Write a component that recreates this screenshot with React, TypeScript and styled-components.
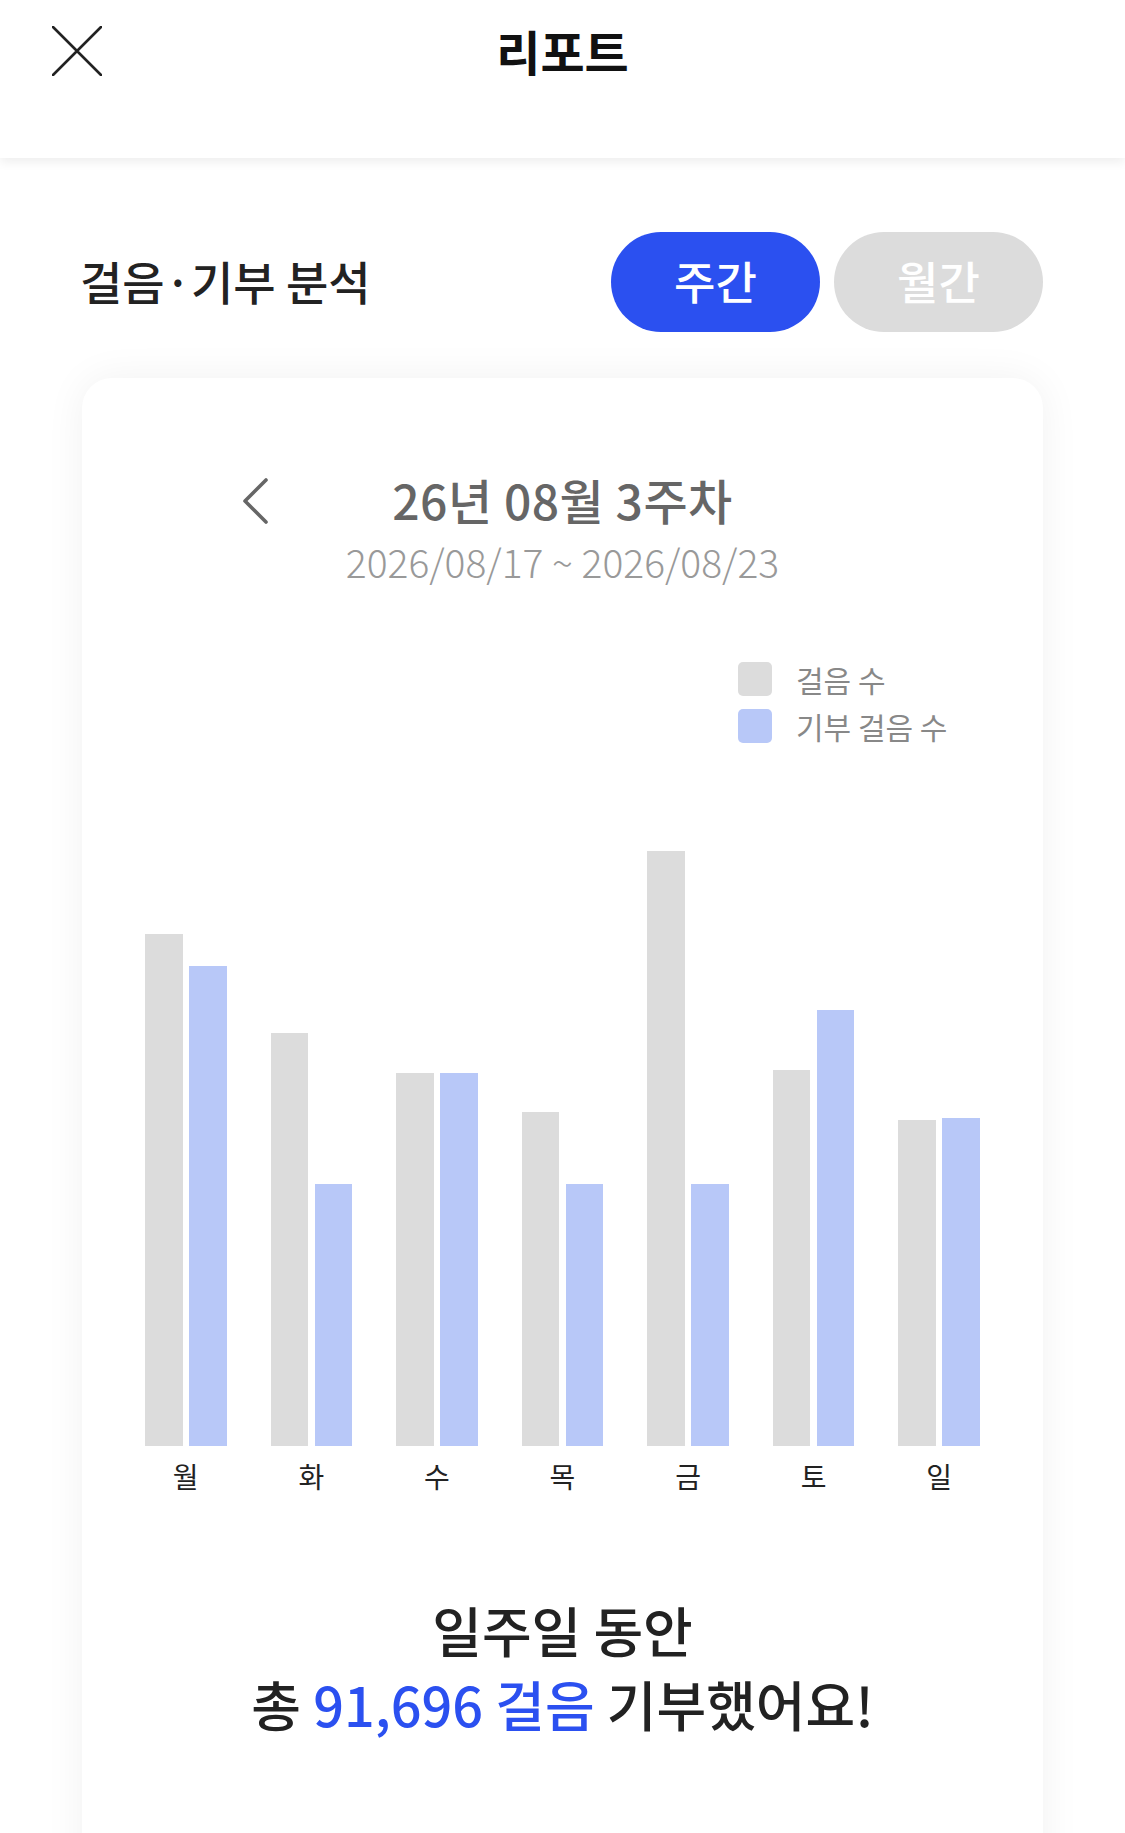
import React from "react";
import styled, { createGlobalStyle } from "styled-components";

const GlobalStyle = createGlobalStyle`
  html, body {
    margin: 0;
    padding: 0;
    background: #ffffff;
  }
  body {
    font-family: "Noto Sans CJK KR", "Noto Sans", sans-serif;
    -webkit-font-smoothing: antialiased;
  }
  * { box-sizing: border-box; }
`;

const Page = styled.div`
  width: 1125px;
  height: 1833px;
  overflow: hidden;
  background: #ffffff;
`;

const Header = styled.header`
  height: 158px;
  background: #ffffff;
  box-shadow: 0 4px 10px rgba(0, 0, 0, 0.07);
  position: relative;
  z-index: 1;
`;

const HeaderRow = styled.div`
  height: 100px;
  display: grid;
  grid-template-columns: 1fr auto 1fr;
  align-items: center;
  padding: 0 52px;
`;

const CloseButton = styled.button`
  width: 50px;
  height: 50px;
  padding: 0;
  border: none;
  background: none;
  display: flex;
  align-items: center;
  justify-content: center;
  justify-self: start;
  margin-top: 2px;
`;

const HeaderTitle = styled.h1`
  margin: 0;
  font-size: 48px;
  font-weight: 700;
  color: #111111;
  line-height: 1;
`;

const SectionRow = styled.div`
  margin-top: 74px;
  height: 100px;
  padding: 0 82px 0 80px;
  display: flex;
  align-items: center;
  justify-content: space-between;
`;

const SectionTitle = styled.h2`
  margin: 0 0 4px;
  font-size: 46px;
  font-weight: 500;
  color: #222222;
`;

const Toggle = styled.div`
  display: flex;
  gap: 14px;
`;

const ToggleButton = styled.button<{ $active?: boolean }>`
  width: 209px;
  height: 100px;
  border: none;
  border-radius: 50px;
  background: ${(p) => (p.$active ? "#2b50f0" : "#dcdcdc")};
  color: #ffffff;
  font-family: inherit;
  font-size: 45px;
  font-weight: 500;
  line-height: 1;
  padding: 0 0 4px;
`;

const Card = styled.section`
  margin: 46px 82px 0;
  min-height: 1600px;
  background: #ffffff;
  border-radius: 30px;
  box-shadow: 0 0 40px rgba(0, 0, 0, 0.06);
  padding-top: 91px;
  display: flex;
  flex-direction: column;
`;

const WeekNav = styled.div`
  display: grid;
  grid-template-columns: 1fr auto 1fr;
  align-items: center;
  height: 60px;
`;

const PrevButton = styled.button`
  justify-self: start;
  margin-left: 156px;
  margin-top: 4px;
  width: 36px;
  height: 50px;
  padding: 0;
  border: none;
  background: none;
  display: flex;
  align-items: center;
  justify-content: center;
`;

const WeekTitle = styled.div`
  font-size: 48px;
  font-weight: 500;
  color: #666666;
  line-height: 60px;
  letter-spacing: 0.5px;
`;

const DateRange = styled.div`
  margin-top: 10px;
  text-align: center;
  font-size: 39px;
  font-weight: 300;
  color: #999999;
  line-height: 44px;
`;

const Legend = styled.div`
  margin-top: 79px;
  align-self: flex-end;
  margin-right: 96px;
  display: flex;
  flex-direction: column;
  gap: 13px;
  width: 209px;
`;

const LegendItem = styled.div`
  display: flex;
  align-items: center;
  gap: 24px;
  height: 34px;
`;

const Swatch = styled.span<{ $color: string }>`
  width: 34px;
  height: 34px;
  border-radius: 5px;
  background: ${(p) => p.$color};
  flex-shrink: 0;
`;

const LegendLabel = styled.span`
  font-size: 30px;
  color: #888888;
  line-height: 1;
  white-space: nowrap;
`;

const Chart = styled.div`
  margin-top: 103px;
  padding: 0 63px;
  display: flex;
  justify-content: space-between;
`;

const DayColumn = styled.div`
  display: flex;
  flex-direction: column;
  align-items: center;
`;

const Bars = styled.div`
  height: 600px;
  display: flex;
  align-items: flex-end;
  gap: 6.5px;
`;

const Bar = styled.div<{ $color: string }>`
  width: 37.5px;
  background: ${(p) => p.$color};
`;

const DayLabel = styled.div`
  margin-top: 10px;
  font-size: 28px;
  line-height: 40px;
  color: #222222;
`;

const Summary = styled.div`
  margin-top: 97px;
  text-align: center;
  font-size: 54px;
  font-weight: 500;
  line-height: 74px;
  color: #222222;
`;

const Highlight = styled.span`
  color: #2b50f0;
`;

const GRAY = "#dcdcdc";
const BLUE = "#b8c8f8";
const MAX_HEIGHT = 595;

const data = [
  { day: "월", steps: 17200, donated: 16150 },
  { day: "화", steps: 13880, donated: 8800 },
  { day: "수", steps: 12530, donated: 12530 },
  { day: "목", steps: 11240, donated: 8800 },
  { day: "금", steps: 20000, donated: 8800 },
  { day: "토", steps: 12650, donated: 14670 },
  { day: "일", steps: 10960, donated: 11030 },
];

const maxSteps = Math.max(...data.flatMap((d) => [d.steps, d.donated]));
const toHeight = (v: number) => `${(v / maxSteps) * MAX_HEIGHT}px`;

export default function App() {
  return (
    <Page>
      <GlobalStyle />
      <Header>
        <HeaderRow>
          <CloseButton aria-label="닫기">
            <svg width="50" height="50" viewBox="0 0 50 50" fill="none">
              <path d="M1 1L49 49M49 1L1 49" stroke="#222" strokeWidth="2.6" strokeLinecap="round" />
            </svg>
          </CloseButton>
          <HeaderTitle>리포트</HeaderTitle>
          <span />
        </HeaderRow>
      </Header>

      <SectionRow>
        <SectionTitle>걸음·기부 분석</SectionTitle>
        <Toggle>
          <ToggleButton $active>주간</ToggleButton>
          <ToggleButton>월간</ToggleButton>
        </Toggle>
      </SectionRow>

      <Card>
        <WeekNav>
          <PrevButton aria-label="이전 주">
            <svg width="26" height="46" viewBox="0 0 26 46" fill="none">
              <path d="M23 2L2 23L23 44" stroke="#666" strokeWidth="3.6" strokeLinecap="round" strokeLinejoin="round" />
            </svg>
          </PrevButton>
          <WeekTitle>26년 08월 3주차</WeekTitle>
          <span />
        </WeekNav>
        <DateRange>2026/08/17 ~ 2026/08/23</DateRange>

        <Legend>
          <LegendItem>
            <Swatch $color={GRAY} />
            <LegendLabel>걸음 수</LegendLabel>
          </LegendItem>
          <LegendItem>
            <Swatch $color={BLUE} />
            <LegendLabel>기부 걸음 수</LegendLabel>
          </LegendItem>
        </Legend>

        <Chart>
          {data.map((d) => (
            <DayColumn key={d.day}>
              <Bars>
                <Bar $color={GRAY} style={{ height: toHeight(d.steps) }} />
                <Bar $color={BLUE} style={{ height: toHeight(d.donated) }} />
              </Bars>
              <DayLabel>{d.day}</DayLabel>
            </DayColumn>
          ))}
        </Chart>

        <Summary>
          일주일 동안
          <br />총 <Highlight>91,696 걸음</Highlight> 기부했어요!
        </Summary>
      </Card>
    </Page>
  );
}
